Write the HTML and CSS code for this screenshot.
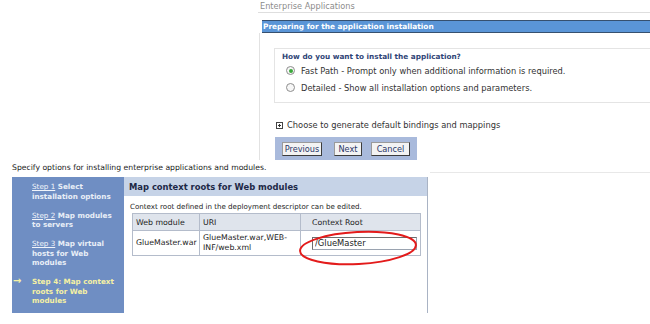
FILE: index.html
```html
<!DOCTYPE html>
<html lang="en">
<head>
  <meta charset="UTF-8" />
  <title>Enterprise Applications - Install</title>
  <link rel="stylesheet" href="styles.css">
</head>
<body>
  <!-- Install wizard, first page -->
  <div class="top">
    <div class="crumb">Enterprise Applications</div>
    <div class="panel-head">Preparing for the application installation</div>
    <div class="panel-body">
      <div class="question">
        <div class="q-title">How do you want to install the application?</div>
        <div class="opt"><span class="radio on"></span>Fast Path - Prompt only when additional information is required.</div>
        <div class="opt"><span class="radio"></span>Detailed - Show all installation options and parameters.</div>
      </div>
      <div class="expand"><span class="plus"></span>Choose to generate default bindings and mappings</div>
      <div class="btnbar">
        <button class="btn prev">Previous</button>
        <button class="btn next">Next</button>
        <button class="btn cancel">Cancel</button>
      </div>
    </div>
  </div>

  <!-- Install wizard, step 4 -->
  <div class="bottom">
    <p class="intro">Specify options for installing enterprise applications and modules.</p>
    <div class="wizard">
      <div class="steps">
        <div class="step">
          <span class="ln"><u>Step 1</u> Select</span>
          <span class="ln">installation options</span>
        </div>
        <div class="step">
          <span class="ln"><u>Step 2</u> Map modules</span>
          <span class="ln">to servers</span>
        </div>
        <div class="step">
          <span class="ln"><u>Step 3</u> Map virtual</span>
          <span class="ln">hosts for Web</span>
          <span class="ln">modules</span>
        </div>
        <div class="step cur">
          <span class="ln">Step 4: Map context</span>
          <span class="ln">roots for Web</span>
          <span class="ln">modules</span>
        </div>
      </div>
      <div class="main">
        <div class="main-head">Map context roots for Web modules</div>
        <p class="note">Context root defined in the deployment descriptor can be edited.</p>
        <table class="roots">
          <tr>
            <th class="c1">Web module</th>
            <th class="c2">URI</th>
            <th class="c3">Context Root</th>
          </tr>
          <tr>
            <td class="c1">GlueMaster.war</td>
            <td class="c2">GlueMaster.war,WEB-INF/web.xml</td>
            <td class="c3"><input class="root-input" type="text" value="/GlueMaster" /></td>
          </tr>
        </table>
        <!-- hand drawn highlight -->
        <svg class="circle" width="130" height="44" viewBox="0 0 130 44">
          <ellipse cx="64" cy="21" rx="58" ry="16" transform="rotate(-3 64 21)" fill="none" stroke="#e31b1b" stroke-width="2" />
        </svg>
      </div>
    </div>
  </div>
</body>
</html>
```

FILE: styles.css
```css
* {
  box-sizing: border-box;
}

body {
  margin: 0;
  width: 650px;
  height: 324px;
  overflow: hidden;
  background: #fff;
  font-family: "DejaVu Sans", Verdana, sans-serif;
  color: #222;
}

/* ---- first page ---- */
.top {
  margin-left: 258px;
  padding-bottom: 7px;
  border-bottom: 1px solid #e8e8e8;
}

.crumb {
  height: 13px;
  padding-left: 2px;
  font-size: 8.2px;
  line-height: 13px;
  color: #8c8c8c;
  border-bottom: 1px solid #dedede;
}

.panel-head {
  margin: 7px 0 0 4px;
  height: 13px;
  padding-left: 1px;
  background: #5a95d7;
  border-top: 1px solid #36506f;
  border-bottom: 1px solid #36506f;
  color: #fff;
  font-weight: bold;
  font-size: 7.4px;
  line-height: 11px;
}

.panel-body {
  margin-left: 1px;
  height: 132px;
  border-left: 1px solid #e2e2e2;
  padding-top: 15px;
}

.question {
  margin-left: 14px;
  padding: 3px 0 6px 7px;
  border: 1px solid #e4e4e4;
  border-right: none;
}

.q-title {
  font-weight: bold;
  font-size: 7.3px;
  line-height: 10px;
  color: #2f4577;
}

.opt {
  display: flex;
  align-items: center;
  height: 17px;
  font-size: 8.3px;
  color: #333;
}
.opt:first-of-type {
  margin-top: 1px;
}

.radio {
  width: 9px;
  height: 9px;
  margin: 0 6px 0 4px;
  border: 1px solid #8e8e8e;
  border-radius: 50%;
  background: #f7f7f7;
  display: flex;
  align-items: center;
  justify-content: center;
}
.radio.on::after {
  content: "";
  width: 4px;
  height: 4px;
  border-radius: 50%;
  background: #3aa83a;
}

.expand {
  display: flex;
  align-items: center;
  margin: 17px 0 0 16px;
  height: 10px;
  font-size: 8.3px;
  color: #333;
}

.plus {
  position: relative;
  width: 7px;
  height: 7px;
  margin-right: 4px;
  border: 1px solid #444;
}
.plus::before,
.plus::after {
  content: "";
  position: absolute;
  background: #333;
}
.plus::before {
  left: 1px;
  top: 2px;
  width: 3px;
  height: 1px;
}
.plus::after {
  left: 2px;
  top: 1px;
  width: 1px;
  height: 3px;
}

.btnbar {
  display: flex;
  margin: 7px 0 0 15px;
  width: 142px;
  height: 23px;
  padding: 5px 0 0 7px;
  background: #a9badc;
}

.btn {
  height: 14px;
  padding: 0;
  font-family: inherit;
  font-size: 8.2px;
  color: #2b3768;
  background: #f3f3f3;
  border: 1px solid #9a9a9a;
  border-right-color: #3c3c3c;
  border-bottom-color: #3c3c3c;
}
.prev { width: 40px; }
.next { width: 28px; margin-left: 12px; }
.cancel { width: 39px; margin-left: 9px; }

/* ---- step 4 page ---- */
.bottom {
  position: relative;
  margin-top: -13px;
  width: 430px;
  height: 164px;
  background: #fff;
  padding-top: 3px;
}

.intro {
  margin: 0 0 4px 12px;
  font-size: 7.7px;
  line-height: 10px;
  color: #222;
}

.wizard {
  display: flex;
  margin-left: 12px;
  width: 416px;
  height: 136px;
}

.steps {
  width: 112px;
  padding: 5px 0 0 20px;
  background: #6f8ec3;
  color: #e9eef7;
  font-weight: bold;
  font-size: 7.2px;
  line-height: 9.5px;
  white-space: nowrap;
}

.step {
  position: relative;
  margin-bottom: 9.5px;
}
.step .ln {
  display: block;
}
.step u {
  font-weight: normal;
  color: #f1f4fa;
}
.step.cur {
  color: #f5f1a4;
}
.step.cur::before {
  content: "\2192";
  position: absolute;
  left: -19px;
  top: -1px;
  font-size: 10px;
}

.main {
  position: relative;
  flex: 1;
  border-right: 1px solid #a9b3c4;
}

.main-head {
  height: 19px;
  padding-left: 5px;
  background: #c6d3e7;
  font-weight: bold;
  font-size: 8.4px;
  line-height: 21px;
  color: #1d2846;
}

.note {
  margin: 6px 0 1px 6px;
  font-size: 7.1px;
  line-height: 10px;
}

.roots {
  margin-left: 8px;
  width: 288px;
  table-layout: fixed;
  border-collapse: collapse;
  font-size: 7.8px;
  color: #222;
}

.roots th,
.roots td {
  border: 1px solid #b4bccb;
  padding: 0 3px;
  text-align: left;
  font-weight: normal;
  vertical-align: middle;
}
.roots th {
  height: 17px;
  background: #dfe4ec;
}
.roots td {
  height: 25px;
  line-height: 10.5px;
}
.roots .c1 { width: 67px; }
.roots .c2 { width: 101px; }
.roots .c3 { width: 120px; padding-left: 11px; }

.root-input {
  display: block;
  width: 105px;
  height: 13px;
  padding: 0 2px;
  font-family: inherit;
  font-size: 8.4px;
  color: #222;
  border: 1px solid #9aa3b0;
  border-top-color: #6e6e6e;
  border-left-color: #6e6e6e;
}

.circle {
  position: absolute;
  left: 170px;
  top: 50px;
}
```
